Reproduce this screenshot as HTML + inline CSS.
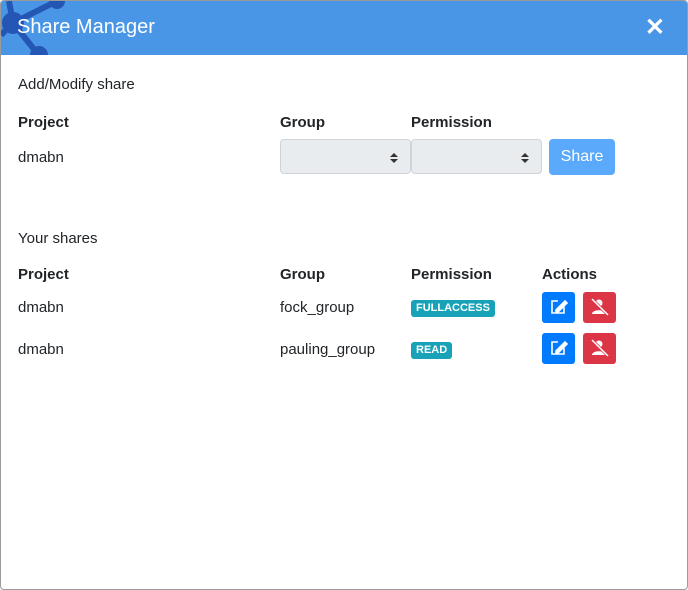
<!DOCTYPE html>
<html><head><style>
body{margin:0;width:688px;height:590px;overflow:hidden;font-family:"Liberation Sans",sans-serif;color:#212529;background:#fff}
.wrap{position:absolute;left:0;top:0;width:686px;height:588px;border:1px solid #9a9a9a;border-radius:4px;overflow:hidden}
.hdr{position:absolute;left:0;top:0;width:686px;height:54px;background:#4a96e6;color:#fff}
.hdr .t{position:absolute;left:16px;top:15px;font-size:20px}
.hdr .x{position:absolute;right:22px;top:12px;font-size:24px;font-weight:bold}
.a{position:absolute;font-size:15px}
.b{position:absolute;font-size:15px;font-weight:bold}
.sel{position:absolute;top:138px;width:129px;height:35px;background:#e9ecef;border:1px solid #ced4da;border-radius:4px;box-sizing:border-box}
.sel:after{content:"";position:absolute;right:12px;top:13px;border-left:4px solid transparent;border-right:4px solid transparent;border-bottom:4px solid #333}
.sel:before{content:"";position:absolute;right:12px;top:19px;border-left:4px solid transparent;border-right:4px solid transparent;border-top:4px solid #333}
.badge{position:absolute;background:#17a2b8;color:#fff;font-size:11px;font-weight:bold;border-radius:3px;padding:2px 5px;line-height:13px}
.btn{position:absolute;width:33px;height:31px;border-radius:3px}
</style></head><body><div class="wrap">
<div class="hdr">
<svg style="position:absolute;left:0;top:0" width="70" height="54"><g stroke="#2456b4" stroke-width="6" fill="#2456b4"><line x1="12" y1="22" x2="56" y2="0"/><line x1="12" y1="22" x2="8" y2="0"/><line x1="12" y1="22" x2="36" y2="52"/><line x1="12" y1="22" x2="0" y2="34"/><circle cx="12" cy="22" r="8"/><circle cx="56" cy="0" r="5"/><circle cx="38" cy="54" r="6"/></g></svg>
<div class="t">Share Manager</div><div class="x">✕</div></div>
<div class="a" style="left:17px;top:75px">Add/Modify share</div>
<div class="b" style="left:17px;top:113px">Project</div>
<div class="b" style="left:279px;top:113px">Group</div>
<div class="b" style="left:410px;top:113px">Permission</div>
<div class="a" style="left:17px;top:148px">dmabn</div>
<div class="sel" style="left:279px;width:131px"></div>
<div class="sel" style="left:410px;width:131px"></div>
<div style="position:absolute;left:548px;top:138px;width:66px;height:36px;background:#5aa9fb;border-radius:4px;color:#fff;font-size:16px;text-align:center;line-height:36px">Share</div>
<div class="a" style="left:17px;top:229px">Your shares</div>
<div class="b" style="left:17px;top:265px">Project</div>
<div class="b" style="left:279px;top:265px">Group</div>
<div class="b" style="left:410px;top:265px">Permission</div>
<div class="b" style="left:541px;top:265px">Actions</div>
<div class="a" style="left:17px;top:298px">dmabn</div>
<div class="a" style="left:279px;top:298px">fock_group</div>
<div class="badge" style="left:410px;top:299px">FULLACCESS</div>
<div class="a" style="left:17px;top:340px">dmabn</div>
<div class="a" style="left:279px;top:340px">pauling_group</div>
<div class="badge" style="left:410px;top:341px">READ</div>
<div class="btn" style="left:541px;top:291px;background:#007bff"></div>
<div class="btn" style="left:582px;top:291px;background:#dc3545"></div>
<div class="btn" style="left:541px;top:332px;background:#007bff"></div>
<div class="btn" style="left:582px;top:332px;background:#dc3545"></div>
<svg style="position:absolute;left:0;top:0" width="688" height="590">
<g fill="none" stroke="#fff" stroke-width="1.6"><path d="M557 300h-6v12h12v-6"/><path d="M555 309l9-9 2 2-9 9h-2z" fill="#fff"/><path d="M557 341h-6v12h12v-6"/><path d="M555 350l9-9 2 2-9 9h-2z" fill="#fff"/></g>
<g fill="#fff"><circle cx="598" cy="302" r="3.5"/><path d="M591 313c0-5 14-5 14 0z"/><circle cx="598" cy="343" r="3.5"/><path d="M591 354c0-5 14-5 14 0z"/></g>
<g stroke="#dc3545" stroke-width="3"><line x1="591" y1="298" x2="607" y2="314"/><line x1="591" y1="339" x2="607" y2="355"/></g>
<g stroke="#fff" stroke-width="1.5"><line x1="591" y1="298" x2="607" y2="314"/><line x1="591" y1="339" x2="607" y2="355"/></g>
</svg>
</div></body></html>
